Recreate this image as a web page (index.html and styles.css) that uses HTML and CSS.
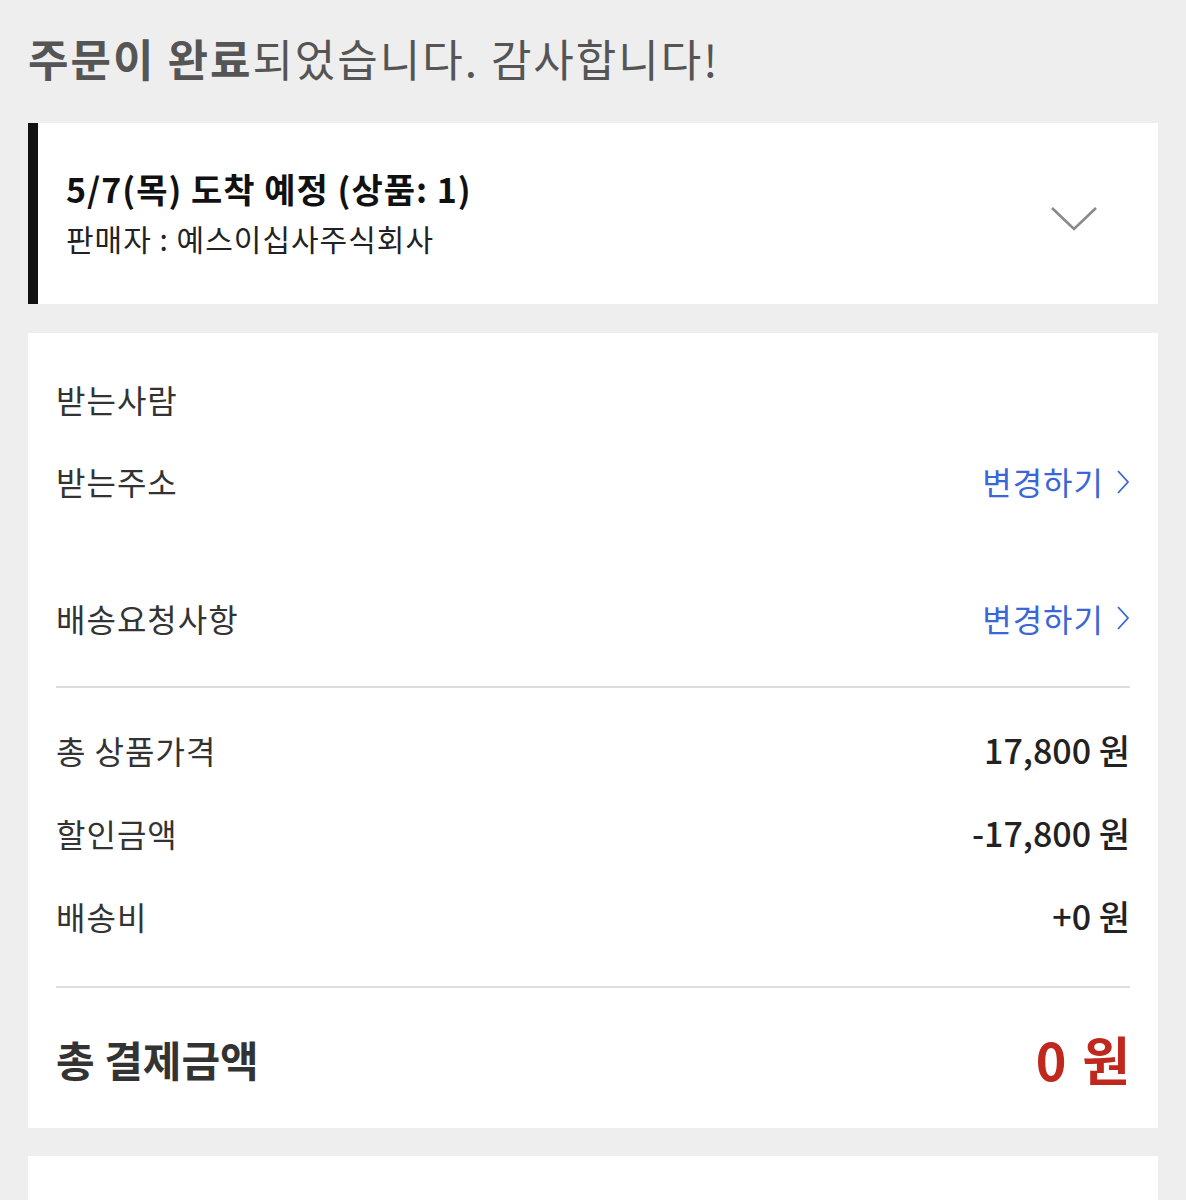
FILE: index.html
```html
<!DOCTYPE html>
<html>
  <head>
    <meta charset="utf-8">
    <link rel="stylesheet" href="styles.css">
  </head>
  <body>
    <h1 class="done"><b>주문이 완료</b>되었습니다. 감사합니다!</h1>

    <div class="card delivery">
      <div class="delivery-text">
        <div class="eta">5/7(목) 도착 예정 (상품: 1)</div>
        <div class="seller">판매자 : 예스이십사주식회사</div>
      </div>
      <svg class="chevron" width="48" height="28" viewBox="0 0 48 28">
        <path d="M2 3 L24 24 L46 3" fill="none" stroke="#8a8a8a" stroke-width="2.6"/>
      </svg>
    </div>

    <div class="card info">
      <div class="row">
        <span class="label">받는사람</span>
      </div>
      <div class="row address">
        <span class="label">받는주소</span>
        <a href="#" class="change">변경하기
          <svg class="arr" width="14" height="26" viewBox="0 0 14 26"><path d="M2 2 L12 13 L2 24" fill="none" stroke="#3a66d6" stroke-width="1.8"/></svg>
        </a>
      </div>
      <div class="row">
        <span class="label">배송요청사항</span>
        <a href="#" class="change">변경하기
          <svg class="arr" width="14" height="26" viewBox="0 0 14 26"><path d="M2 2 L12 13 L2 24" fill="none" stroke="#3a66d6" stroke-width="1.8"/></svg>
        </a>
      </div>

      <hr class="line">

      <div class="row">
        <span class="label">총 상품가격</span>
        <span class="value">17,800 원</span>
      </div>
      <div class="row">
        <span class="label">할인금액</span>
        <span class="value">-17,800 원</span>
      </div>
      <div class="row">
        <span class="label">배송비</span>
        <span class="value">+0 원</span>
      </div>

      <hr class="line last">

      <div class="row total">
        <span class="label">총 결제금액</span>
        <span class="value">0 원</span>
      </div>
    </div>

    <div class="card next"></div>
  </body>
</html>
```

FILE: styles.css
```css
body{
  margin:0;
  background-color:#eeeeee;
  font-family:"Noto Sans CJK KR","Noto Sans",sans-serif;
  color:#333333;
  padding:0 28px;
}

.done{
  margin:0;
  padding:26px 0 33px 0;
  font-size:44px;
  font-weight:400;
  line-height:64px;
  color:#555555;
  letter-spacing:2px;
}
.done b{
  font-weight:700;
}

.card{
  background-color:#ffffff;
}

.delivery{
  height:181px;
  border-left:10px solid #111111;
  display:flex;
  align-items:center;
  justify-content:space-between;
  padding:0 60px 0 28px;
  margin-bottom:29px;
}
.delivery-text{
  margin-top:-4px;
}
.eta{
  font-size:34px;
  font-weight:700;
  color:#111111;
  line-height:46px;
  letter-spacing:1px;
}
.seller{
  font-size:30px;
  color:#222222;
  line-height:40px;
  margin-top:6px;
  letter-spacing:1px;
}
.chevron{
  margin-top:10px;
}

.info{
  padding:24px 28px 0 28px;
  margin-bottom:28px;
}
.row{
  display:flex;
  justify-content:space-between;
  align-items:center;
  height:83px;
}
.row.address{
  align-items:flex-start;
  height:136px;
  line-height:83px;
}
.label{
  font-size:32px;
  color:#333333;
  letter-spacing:1px;
}
.change{
  font-size:32px;
  color:#3a66d6;
  text-decoration:none;
  letter-spacing:1px;
  display:flex;
  align-items:center;
}
.arr{
  margin-left:12px;
}
.value{
  font-size:34px;
  font-weight:500;
  color:#222222;
}
.line{
  border:none;
  border-top:2px solid #dddddd;
  margin:27px 0 20px 0;
}
.line.last{
  margin:29px 0 0 0;
}
.row.total{
  height:140px;
}
.total .label{
  font-size:42px;
  font-weight:700;
  letter-spacing:0;
}
.total .value{
  font-size:52px;
  font-weight:700;
  color:#c0281e;
  letter-spacing:2px;
  margin-right:-2px;
}

.next{
  height:60px;
}
```
